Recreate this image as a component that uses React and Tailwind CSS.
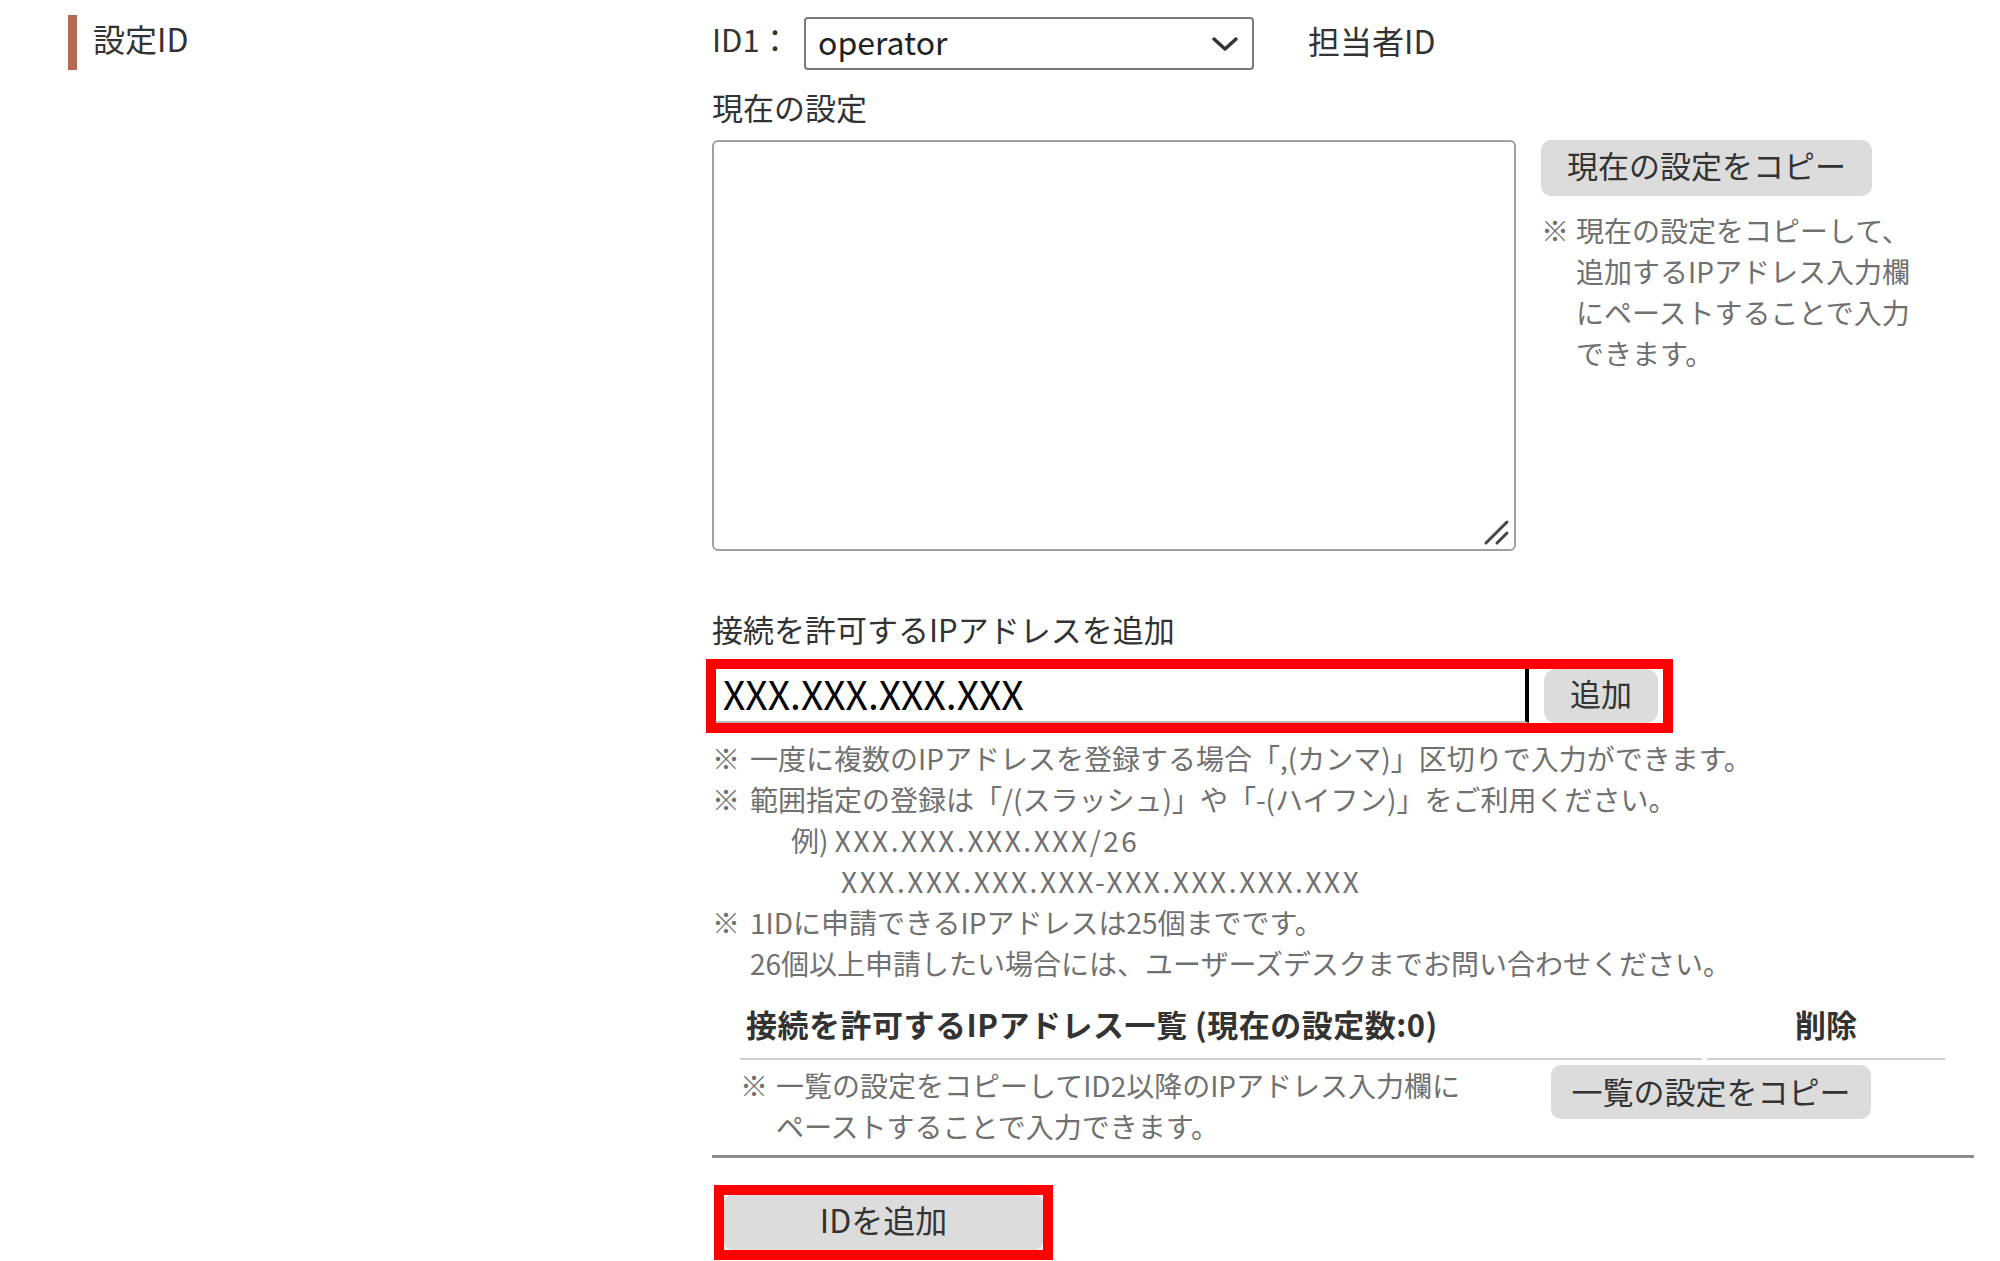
import React from 'react';

const Note = ({ children, className = '' }) => (
    <div className={`flex leading-[41px] ${className}`}>
        <span className="w-[38px] shrink-0">※</span>
        <span>{children}</span>
    </div>
);

const App = () => {
    return (
        <div className="flex w-[2000px] h-[1261px] bg-white text-[#333] font-['Noto_Sans_CJK_JP',sans-serif] overflow-hidden">
            {/* left label column */}
            <div className="w-[712px] shrink-0 pl-[68px] pt-[15px]">
                <div className="flex items-center h-[55px] border-l-[9px] border-[#b46b52] pl-[16px] pb-[10px] text-[32px]">
                    設定ID
                </div>
            </div>

            {/* right form column */}
            <div className="w-[1262px] shrink-0 pt-[17px]">
                <div className="flex items-center h-[53px]">
                    <span className="w-[92px] text-[31px] pb-[8px]">ID1：</span>
                    <div className="flex items-center justify-between w-[450px] h-[53px] border-2 border-[#7a7a7a] rounded-[4px] pl-[12px] pr-[13px]">
                        <span className="text-[32px] text-[#222] pb-[6px]">operator</span>
                        <svg width="28" height="16" viewBox="0 0 28 16" fill="none">
                            <polyline points="3,3 14,13 25,3" stroke="#333" strokeWidth="3.5" strokeLinecap="round" strokeLinejoin="round" />
                        </svg>
                    </div>
                    <span className="ml-[54px] text-[32px] pb-[8px]">担当者ID</span>
                </div>

                <div className="mt-[17px] mb-[13px] leading-[40px] text-[31px]">現在の設定</div>

                <div className="flex items-start gap-[25px]">
                    <div className="relative w-[804px] h-[411px] border-2 border-[#a0a0a0] rounded-[6px]">
                        <svg className="absolute right-[3px] bottom-[3px]" width="30" height="30" viewBox="0 0 30 30">
                            <line x1="5" y1="27" x2="26" y2="6" stroke="#444" strokeWidth="3" strokeLinecap="round" />
                            <line x1="16" y1="27" x2="26" y2="17" stroke="#444" strokeWidth="3" strokeLinecap="round" />
                        </svg>
                    </div>
                    <div className="w-[380px]">
                        <button className="w-[331px] h-[56px] pb-[6px] bg-[#dcdcdc] rounded-[10px] text-[31px] text-[#333]">
                            現在の設定をコピー
                        </button>
                        <div className="mt-[14px] text-[28px] text-[#707070]">
                            <div className="flex leading-[41px]">
                                <span className="w-[35px] shrink-0">※</span>
                                <span>
                                    現在の設定をコピーして、<br />
                                    追加するIPアドレス入力欄<br />
                                    にペーストすることで入力<br />
                                    できます。
                                </span>
                            </div>
                        </div>
                    </div>
                </div>

                <div className="mt-[58px] mb-[10px] leading-[40px] text-[31px]">接続を許可するIPアドレスを追加</div>

                <div className="flex ml-[-6px] w-[967px] h-[74px] border-[10px] border-[#ff0000]">
                    <div className="flex items-center w-[813px] h-full border-r-4 border-b-2 border-r-black border-b-[#bbb] pl-[7px] pb-[4px] text-[39px] text-black">
                        XXX.XXX.XXX.XXX
                    </div>
                    <button className="ml-[15px] w-[114px] h-full pb-[6px] bg-[#dcdcdc] rounded-[12px] text-[31px] text-[#333]">
                        追加
                    </button>
                </div>

                <div className="mt-[5px] text-[28px] text-[#707070]">
                    <Note>一度に複数のIPアドレスを登録する場合「,(カンマ)」区切りで入力ができます。</Note>
                    <Note>範囲指定の登録は「/(スラッシュ)」や「-(ハイフン)」をご利用ください。</Note>
                    <div className="pl-[79px] leading-[41px]">
                        例) <span className="tracking-[2.6px]">XXX.XXX.XXX.XXX/26</span>
                    </div>
                    <div className="pl-[129px] leading-[41px] tracking-[2.6px]">XXX.XXX.XXX.XXX-XXX.XXX.XXX.XXX</div>
                    <Note>1IDに申請できるIPアドレスは25個までです。</Note>
                    <div className="pl-[38px] leading-[41px]">26個以上申請したい場合には、ユーザーズデスクまでお問い合わせください。</div>
                </div>

                <div className="ml-[28px] w-[1205px] mt-[6px]">
                    <div className="flex gap-[5px] text-[31px] font-bold">
                        <div className="w-[962px] h-[70px] flex items-center pl-[6px] border-b-2 border-[#cfcfcf] tracking-[0.5px]">
                            接続を許可するIPアドレス一覧 (現在の設定数:0)
                        </div>
                        <div className="flex-1 h-[70px] flex items-center justify-center border-b-2 border-[#cfcfcf]">
                            削除
                        </div>
                    </div>
                    <div className="flex items-start pt-[5px] pb-[8px]">
                        <div className="w-[811px] text-[28px] text-[#707070] leading-[41px]">
                            <div className="flex">
                                <span className="w-[36px] shrink-0">※</span>
                                <span>
                                    一覧の設定をコピーしてID2以降のIPアドレス入力欄に<br />
                                    ペーストすることで入力できます。
                                </span>
                            </div>
                        </div>
                        <button className="w-[320px] h-[54px] pb-[2px] bg-[#dcdcdc] rounded-[10px] text-[31px] text-[#333]">
                            一覧の設定をコピー
                        </button>
                    </div>
                </div>

                <div className="border-t-[3px] border-[#8c8c8c]" />

                <div className="mt-[27px] ml-[2px] w-[339px] h-[75px] border-[10px] border-[#ff0000]">
                    <button className="w-full h-full pb-[8px] bg-[#dcdcdc] rounded-[8px] text-[32px] text-[#333]">
                        IDを追加
                    </button>
                </div>
            </div>
        </div>
    );
};

export default App;
